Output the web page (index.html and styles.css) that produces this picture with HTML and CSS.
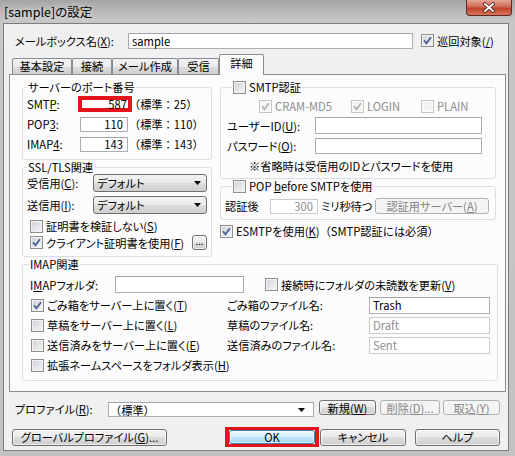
FILE: index.html
```html
<!DOCTYPE html>
<html lang="ja">
<head>
<meta charset="utf-8">
<title>[sample]の設定</title>
<link rel="stylesheet" href="styles.css">
</head>
<body>
<div class="window">
  <div class="titlebar">
    <span class="title">[sample]の設定</span>
    <div class="close">
      <svg width="14" height="11" viewBox="0 0 14 11"><path d="M3 2 L11 9 M11 2 L3 9" fill="none" stroke="#3a1d18" stroke-width="3.6" stroke-linecap="round"/><path d="M3 2 L11 9 M11 2 L3 9" fill="none" stroke="#ffffff" stroke-width="2" stroke-linecap="round"/></svg>
    </div>
  </div>
  <div class="client">
    <div class="mailbox-row">
      <span class="mb-label">メールボックス名(<u>X</u>):</span>
      <div class="edit mb-edit">sample</div>
      <span class="check mb-check"><span class="cb on"><svg class="tick" width="9" height="9" viewBox="0 0 9 9"><path d="M1 4.3 L3.4 7.2 L8 1.2" fill="none" stroke="#4b5f93" stroke-width="1.8"/></svg></span><span>巡回対象(<u>/</u>)</span></span>
    </div>
    <div class="tabs">
      <div class="tab t1">基本設定</div>
      <div class="tab t2">接続</div>
      <div class="tab t3">メール作成</div>
      <div class="tab t4">受信</div>
      <div class="tab active t5">詳細</div>
    </div>
    <div class="panel">
      <div class="cols">
        <div class="col">
          <fieldset class="group g-ports">
            <legend>サーバーのポート番号</legend>
            <div class="port-row"><span class="port-label">SMT<u>P</u>:</span><span class="edit num hl">587</span><span class="std">（標準：25）</span></div>
            <div class="port-row"><span class="port-label">POP<u>3</u>:</span><span class="edit num">110</span><span class="std">（標準：110）</span></div>
            <div class="port-row"><span class="port-label">IMAP<u>4</u>:</span><span class="edit num">143</span><span class="std">（標準：143）</span></div>
          </fieldset>
          <fieldset class="group g-ssl">
            <legend>SSL/TLS関連</legend>
            <div class="ssl-row"><span class="ssl-label">受信用(<u>C</u>):</span><span class="dropdown"><span>デフォルト</span><svg class="arrow" width="7" height="4" viewBox="0 0 7 4"><path d="M0 0 H7 L3.5 4 Z" fill="#000"/></svg></span></div>
            <div class="ssl-row r2"><span class="ssl-label">送信用(<u>I</u>):</span><span class="dropdown"><span>デフォルト</span><svg class="arrow" width="7" height="4" viewBox="0 0 7 4"><path d="M0 0 H7 L3.5 4 Z" fill="#000"/></svg></span></div>
            <div class="ssl-check c1"><span class="check"><span class="cb"></span><span>証明書を検証しない(<u>S</u>)</span></span></div>
            <div class="ssl-check c2"><span class="check"><span class="cb on"><svg class="tick" width="9" height="9" viewBox="0 0 9 9"><path d="M1 4.3 L3.4 7.2 L8 1.2" fill="none" stroke="#4b5f93" stroke-width="1.8"/></svg></span><span>クライアント証明書を使用(<u>F</u>)</span></span><span class="btn dots">...</span></div>
          </fieldset>
        </div>
        <div class="col">
          <fieldset class="group g-auth">
            <legend><span class="check"><span class="cb"></span><span>SMTP認証</span></span></legend>
            <div class="auth-types">
              <span class="check dis a1"><span class="cb dis on"><svg class="tick" width="9" height="9" viewBox="0 0 9 9"><path d="M1 4.3 L3.4 7.2 L8 1.2" fill="none" stroke="#b4b4b4" stroke-width="1.8"/></svg></span><span>CRAM-MD5</span></span>
              <span class="check dis a2"><span class="cb dis on"><svg class="tick" width="9" height="9" viewBox="0 0 9 9"><path d="M1 4.3 L3.4 7.2 L8 1.2" fill="none" stroke="#b4b4b4" stroke-width="1.8"/></svg></span><span>LOGIN</span></span>
              <span class="check dis"><span class="cb dis"></span><span>PLAIN</span></span>
            </div>
            <div class="auth-row"><span class="auth-label">ユーザーID(<u>U</u>):</span><span class="edit auth-edit"></span></div>
            <div class="auth-row pw"><span class="auth-label">パスワード(<u>O</u>):</span><span class="edit auth-edit"></span></div>
            <div class="note">※省略時は受信用のIDとパスワードを使用</div>
          </fieldset>
          <fieldset class="group g-pop">
            <legend><span class="check"><span class="cb"></span><span>POP <u>b</u>efore SMTPを使用</span></span></legend>
            <div class="pop-row">
              <span class="pop-label">認証後</span>
              <span class="edit num dis pop-edit">300</span>
              <span class="pop-unit">ミリ秒待つ</span>
              <span class="btn disabled pop-btn">認証用サーバー(<u>A</u>)</span>
            </div>
          </fieldset>
          <div class="esmtp"><span class="check"><span class="cb on"><svg class="tick" width="9" height="9" viewBox="0 0 9 9"><path d="M1 4.3 L3.4 7.2 L8 1.2" fill="none" stroke="#4b5f93" stroke-width="1.8"/></svg></span><span>ESMTPを使用(<u>K</u>)<span class="fw">（SMTP認証には必須）</span></span></span></div>
        </div>
      </div>
      <fieldset class="group g-imap">
        <legend>IMAP関連</legend>
        <div class="imap-row1">
          <span class="imap-label">I<u>M</u>APフォルダ:</span>
          <span class="edit imap-edit"></span>
          <span class="check imap-sync"><span class="cb"></span><span>接続時にフォルダの未読数を更新(<u>V</u>)</span></span>
        </div>
        <div class="imap-grid">
          <span class="check ic"><span class="cb on"><svg class="tick" width="9" height="9" viewBox="0 0 9 9"><path d="M1 4.3 L3.4 7.2 L8 1.2" fill="none" stroke="#4b5f93" stroke-width="1.8"/></svg></span><span>ごみ箱をサーバー上に置く(<u>T</u>)</span></span>
          <span class="il">ごみ箱のファイル名:</span>
          <span class="edit ie">Trash</span>
          <span class="check ic"><span class="cb"></span><span>草稿をサーバー上に置く(<u>L</u>)</span></span>
          <span class="il">草稿のファイル名:</span>
          <span class="edit ie dis">Draft</span>
          <span class="check ic"><span class="cb"></span><span>送信済みをサーバー上に置く(<u>E</u>)</span></span>
          <span class="il">送信済みのファイル名:</span>
          <span class="edit ie dis">Sent</span>
          <span class="check ic"><span class="cb"></span><span>拡張ネームスペースをフォルダ表示(<u>H</u>)</span></span>
        </div>
      </fieldset>
    </div>
    <div class="profile-row">
      <span class="pf-label">プロファイル(<u>R</u>):</span>
      <span class="edit pf-combo"><span class="fw">（標準）</span><svg class="arrow" width="7" height="4" viewBox="0 0 7 4"><path d="M0 0 H7 L3.5 4 Z" fill="#000"/></svg></span>
      <span class="btn pf-new"><span>新規(<u>W</u>)</span></span>
      <span class="btn disabled pf-del"><span>削除(<u>D</u>)...</span></span>
      <span class="btn disabled pf-imp"><span>取込(<u>Y</u>)</span></span>
    </div>
    <div class="button-row">
      <span class="btn b-global"><span>グローバルプロファイル(<u>G</u>)...</span></span>
      <span class="ok-wrap"><span class="btn default b-ok">OK</span></span>
      <span class="btn b-cancel">キャンセル</span>
      <span class="btn b-help">ヘルプ</span>
    </div>
  </div>
</div>
</body>
</html>
```
FILE: styles.css
```css
* { box-sizing: border-box; }
body { margin: 0; background: #ffffff; }
u { text-decoration: underline; text-underline-offset: 1px; }

.window {
  width: 515px;
  height: 456px;
  overflow: hidden;
  background: linear-gradient(to bottom, #a4a4a4 0, #c6c6c6 20px, #c2c2c2 100%);
  font-family: "Noto Sans CJK JP", "Noto Sans", sans-serif;
  font-size: 11.2px;
  line-height: 14px;
  color: #000;
  font-feature-settings: "palt";
}

.titlebar { height: 23px; display: flex; align-items: flex-start; }
.title { margin: 5px 0 0 4px; font-size: 12.5px; line-height: 14px; text-shadow: 0 0 6px rgba(255,255,255,0.9); }
.close {
  margin-left: auto; margin-right: 3px;
  width: 46px; height: 16px;
  border: 1px solid #5a2a22; border-top: none;
  border-radius: 0 0 4px 4px;
  background: linear-gradient(#e8a597, #d06a52 45%, #c2412a 55%, #d9745a);
  display: flex; align-items: center; justify-content: center;
}

.client {
  margin-left: 3px;
  width: 506px; height: 428px;
  border: 1px solid #7d7d7d;
  background: #f0f0f0;
  padding-left: 5px;
}

/* full-width punctuation keeps its natural width */
.std, .fw { font-feature-settings: normal; }

/* generic controls */
.edit {
  display: flex; align-items: center;
  background: #ffffff;
  border: 1px solid #abadb3;
  border-top-color: #a0a3aa;
  padding: 0 3px;
  white-space: nowrap;
}
.edit.dis { border-color: #c9cbce; color: #8d8d8d; }
.check { display: inline-flex; align-items: center; white-space: nowrap; }
.check.dis { color: #8d8d8d; }
.cb {
  width: 13px; height: 13px; flex: none;
  border: 1px solid #8e8f8f;
  background: linear-gradient(135deg, #cdd1d7, #f7f7f7);
  box-shadow: inset 0 0 0 1px #f2f2f2;
  margin-right: 3px;
  display: flex; align-items: center; justify-content: center;
}
.cb.dis { border-color: #c4c4c4; background: #f4f4f4; box-shadow: inset 0 0 0 1px #fbfbfb; }
.btn {
  display: flex; align-items: center; justify-content: center;
  border: 1px solid #707070;
  border-radius: 3px;
  background: linear-gradient(#f2f2f2, #ebebeb 50%, #dddddd 50%, #cfcfcf);
  box-shadow: inset 0 0 0 1px rgba(255,255,255,0.6);
  white-space: nowrap;
}
.btn.disabled { border-color: #adb2b5; background: #f4f4f4; color: #838383; box-shadow: none; }
.btn.default { border-color: #3c7fb1; background: linear-gradient(#eaf6fd, #d9f0fc 50%, #bee6fd 50%, #a7d9f5); }
.arrow { flex: none; }

/* mailbox row */
.mailbox-row { display: flex; align-items: center; height: 17px; margin-top: 8px; }
.mb-label { margin-left: 6px; width: 113px; }
.mb-edit { width: 285px; height: 16px; }
.mb-check { margin-left: 8px; }

/* tabs */
.tabs { position: relative; z-index: 1; display: flex; align-items: flex-end; height: 21px; margin-top: 5px; padding-left: 3px; }
.tab {
  height: 16px; margin-bottom: 1px;
  border: 1px solid #898c95; border-bottom: none;
  border-radius: 2px 2px 0 0;
  background: linear-gradient(#f2f2f2, #ebebeb 50%, #dddddd 50%, #cfcfcf);
  text-align: center; line-height: 15px;
}
.t1 { width: 60px; }
.t2 { width: 40px; }
.t3 { width: 66px; }
.t4 { width: 41px; }
.tab.active { width: 45px; height: 21px; margin-bottom: 0; background: #fcfcfc; line-height: 17px; }

/* panel */
.panel {
  margin-top: -1px;
  width: 497px; height: 318px;
  border: 1px solid #898c95;
  background: #fcfcfc;
  padding: 5px 7px 0 12px;
}
.cols { display: grid; grid-template-columns: 190px 276px; column-gap: 8px; align-items: start; }

fieldset.group {
  margin: 0; min-width: 0;
  border: 1px solid #d5dfe5;
  border-radius: 3px;
  padding: 0 4px 5px 4px;
}
legend { padding: 0 1px; height: 14px; line-height: 14px; white-space: nowrap; }

/* ports */
.g-ports { padding-top: 1px; }
.port-row { display: flex; align-items: center; height: 20px; }
.port-label { width: 53px; }
.edit.num { width: 48px; height: 15px; justify-content: flex-end; padding-right: 4px; }
.edit.num.hl { width: 54px; height: 16px; margin-left: -2px; border: 4px solid #e3141c; padding-right: 1px; overflow: visible; }
.std { margin-left: 1px; white-space: nowrap; }
.hl + .std { margin-left: -3px; }

/* ssl */
.g-ssl { margin-top: 8px; padding-bottom: 1px; }
.ssl-row { display: flex; align-items: center; height: 18px; }
.ssl-row.r2 { margin-top: 4px; }
.ssl-label { width: 66px; }
.dropdown {
  width: 114px; height: 18px;
  display: flex; align-items: center;
  padding-left: 3px;
  border: 1px solid #707070; border-radius: 3px;
  background: linear-gradient(#f2f2f2, #ebebeb 50%, #dddddd 50%, #cfcfcf);
}
.dropdown .arrow { margin-left: auto; margin-right: 5px; }
.ssl-check { display: flex; align-items: center; padding-left: 3px; }
.ssl-check.c1 { height: 16px; margin-top: 4px; }
.ssl-check.c2 { height: 17px; }
.dots { margin-left: auto; width: 15px; height: 15px; font-size: 9px; line-height: 8px; align-items: flex-end; padding-bottom: 3px; }

/* smtp auth */
.g-auth { margin-top: 1px; }
.g-auth legend, .g-pop legend { margin-left: 7px; }
.auth-types { display: flex; height: 16px; margin-top: 4px; padding-left: 34px; align-items: center; }
.a1 { width: 92px; }
.a2 { width: 70px; }
.auth-row { display: flex; align-items: center; height: 17px; margin-top: 3px; }
.auth-row.pw { height: 16px; margin-top: 4px; }
.auth-label { width: 90px; padding-left: 2px; }
.auth-edit { width: 167px; height: 100%; }
.note { margin-top: 5px; height: 14px; padding-left: 24px; white-space: nowrap; }

/* pop before smtp */
.g-pop { margin-top: 7px; padding-bottom: 7px; }
.pop-row { display: flex; align-items: center; height: 16px; margin-top: 5px; }
.pop-label { width: 45px; }
.pop-edit { width: 49px; height: 15px; }
.pop-unit { width: 54px; margin-left: 3px; white-space: nowrap; }
.pop-btn { width: 114px; height: 16px; }

.esmtp { display: flex; align-items: center; height: 16px; margin-top: 3px; }

/* imap */
.g-imap { margin-top: 2px; padding: 0 5px 2px 4px; }
.g-imap legend { margin-left: 2px; }
.imap-row1 { display: flex; align-items: center; height: 17px; margin-top: 5px; }
.imap-label { width: 88px; padding-left: 3px; }
.imap-edit { width: 129px; height: 17px; }
.imap-sync { margin-left: 21px; }
.imap-grid { display: grid; grid-template-columns: 200px 142px 121px; grid-auto-rows: 20px; align-items: center; margin-top: 2px; }
.ic { padding-left: 4px; }
.ie { height: 17px; }

/* profile */
.profile-row { display: flex; align-items: flex-start; height: 18px; margin-top: 8px; }
.pf-label { margin: 2px 0 0 6px; width: 93px; }
.pf-combo { margin-top: 2px; width: 206px; height: 15px; padding-left: 1px; }
.pf-combo .arrow { margin-left: auto; margin-right: 5px; }
.pf-new { margin-left: 5px; width: 57px; height: 15px; }
.pf-del { margin-left: 4px; width: 60px; height: 15px; }
.pf-imp { margin-left: 3px; width: 57px; height: 15px; }

/* bottom buttons */
.button-row { display: flex; align-items: center; height: 20px; margin-top: 9px; }
.b-global { margin-left: 3px; width: 155px; height: 17px; }
.ok-wrap { margin-left: 58px; width: 94px; height: 20px; border: 3px solid #e3141c; border-left-width: 4px; border-right-width: 4px; display: flex; }
.b-ok { width: 100%; height: 100%; }
.b-cancel { margin-left: 1px; width: 86px; height: 17px; }
.b-help { margin-left: 9px; width: 85px; height: 17px; }
```
